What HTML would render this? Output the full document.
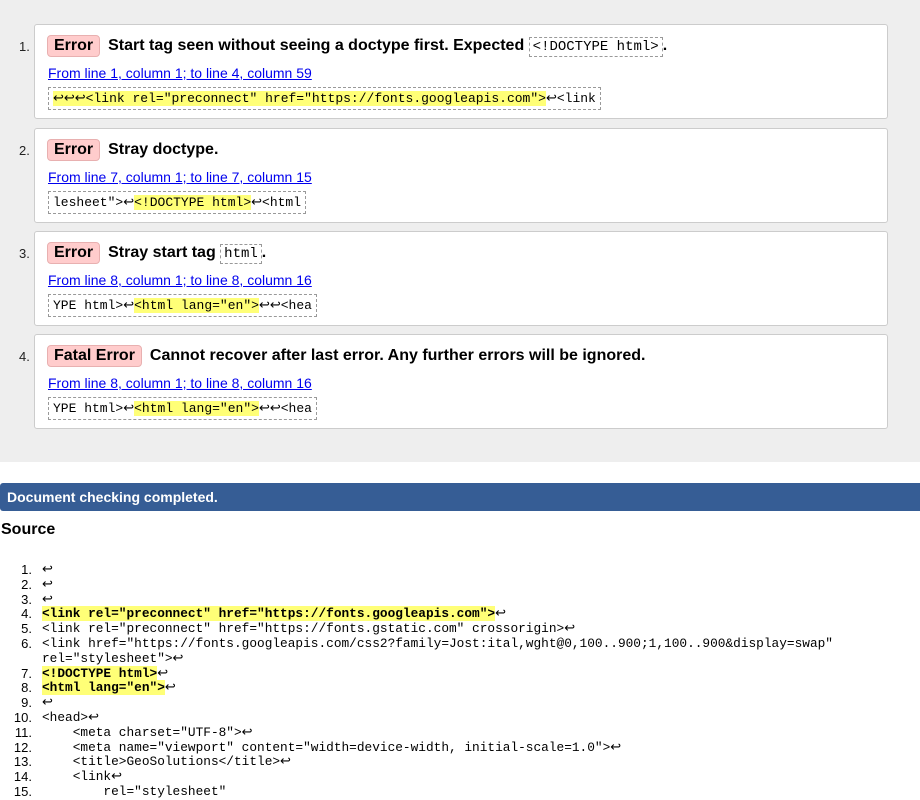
<!DOCTYPE html>
<html><head><style>
body{margin:0;width:920px;height:789px;overflow:hidden;font-family:"Liberation Sans",Arial,sans-serif;background:#fff;color:#000}
.top{position:absolute;left:0;top:0;width:920px;height:462px;background:#eee}
.box{position:absolute;left:34px;width:852px;height:93px;background:#fff;border:1px solid #ccc;border-radius:3px}
.num{position:absolute;left:-16px;top:14px;font-size:13px;color:#222}
.h{position:absolute;left:12px;top:10px;font-size:16px;font-weight:bold;white-space:nowrap;line-height:22px}
.tag{display:inline-block;background:#fcc;border:1px solid #e8b0b0;border-radius:4px;padding:0 6px;margin-right:8px;line-height:20px}
.h code{font-family:"Liberation Mono",monospace;font-weight:normal;font-size:14px;border:1px dashed #999;padding:1px 3px}
.lk{position:absolute;left:13px;top:40px;font-size:14px;color:#00e;text-decoration:underline}
.ex{position:absolute;left:13px;top:62px;border:1px dashed #999;padding:2px 4px;font-family:"Liberation Mono",monospace;font-size:13px;line-height:17px;white-space:pre}
.y{background:#ff7}
.bar{position:absolute;left:0;top:483px;width:920px;height:28px;background:#365d95;border-radius:3px 0 0 3px;color:#fff;font-weight:bold;font-size:14px;line-height:28px;padding-left:7px;box-sizing:border-box}
.src{position:absolute;left:1px;top:521px;font-size:16px;font-weight:bold}
.code{position:absolute;left:0;top:563px;font-size:13px;line-height:14.8px}
.row{position:relative;height:14.8px;white-space:pre}
.row .n{position:absolute;left:0;width:32px;text-align:right;font-family:"Liberation Sans",sans-serif}
.row .c{position:absolute;left:42px;font-family:"Liberation Mono",monospace;font-size:12.8px}
.b{font-weight:bold;background:#ff7}
</style></head><body>
<div class="top">
<div class="box" style="top:24px"><span class="num">1.</span>
<div class="h"><span class="tag">Error</span>Start tag seen without seeing a doctype first. Expected <code>&lt;!DOCTYPE html&gt;</code>.</div>
<div class="lk">From line 1, column 1; to line 4, column 59</div>
<div class="ex"><span class="y">↩↩↩&lt;link rel="preconnect" href="https://fonts.googleapis.com"&gt;</span>↩&lt;link</div></div>
<div class="box" style="top:128px"><span class="num">2.</span>
<div class="h"><span class="tag">Error</span>Stray doctype.</div>
<div class="lk">From line 7, column 1; to line 7, column 15</div>
<div class="ex">lesheet"&gt;↩<span class="y">&lt;!DOCTYPE html&gt;</span>↩&lt;html</div></div>
<div class="box" style="top:231px"><span class="num">3.</span>
<div class="h"><span class="tag">Error</span>Stray start tag <code>html</code>.</div>
<div class="lk">From line 8, column 1; to line 8, column 16</div>
<div class="ex">YPE html&gt;↩<span class="y">&lt;html lang="en"&gt;</span>↩↩&lt;hea</div></div>
<div class="box" style="top:334px"><span class="num">4.</span>
<div class="h"><span class="tag">Fatal Error</span>Cannot recover after last error. Any further errors will be ignored.</div>
<div class="lk">From line 8, column 1; to line 8, column 16</div>
<div class="ex">YPE html&gt;↩<span class="y">&lt;html lang="en"&gt;</span>↩↩&lt;hea</div></div>
</div>
<div class="bar">Document checking completed.</div>
<div class="src">Source</div>
<div class="code">
<div class="row"><span class="n">1.</span><span class="c">↩</span></div>
<div class="row"><span class="n">2.</span><span class="c">↩</span></div>
<div class="row"><span class="n">3.</span><span class="c">↩</span></div>
<div class="row"><span class="n">4.</span><span class="c"><span class="b">&lt;link rel="preconnect" href="https://fonts.googleapis.com"&gt;</span>↩</span></div>
<div class="row"><span class="n">5.</span><span class="c">&lt;link rel="preconnect" href="https://fonts.gstatic.com" crossorigin&gt;↩</span></div>
<div class="row"><span class="n">6.</span><span class="c">&lt;link href="https://fonts.googleapis.com/css2?family=Jost:ital,wght@0,100..900;1,100..900&amp;display=swap"</span></div>
<div class="row"><span class="c">rel="stylesheet"&gt;↩</span></div>
<div class="row"><span class="n">7.</span><span class="c"><span class="b">&lt;!DOCTYPE html&gt;</span>↩</span></div>
<div class="row"><span class="n">8.</span><span class="c"><span class="b">&lt;html lang="en"&gt;</span>↩</span></div>
<div class="row"><span class="n">9.</span><span class="c">↩</span></div>
<div class="row"><span class="n">10.</span><span class="c">&lt;head&gt;↩</span></div>
<div class="row"><span class="n">11.</span><span class="c">    &lt;meta charset="UTF-8"&gt;↩</span></div>
<div class="row"><span class="n">12.</span><span class="c">    &lt;meta name="viewport" content="width=device-width, initial-scale=1.0"&gt;↩</span></div>
<div class="row"><span class="n">13.</span><span class="c">    &lt;title&gt;GeoSolutions&lt;/title&gt;↩</span></div>
<div class="row"><span class="n">14.</span><span class="c">    &lt;link↩</span></div>
<div class="row"><span class="n">15.</span><span class="c">        rel="stylesheet"</span></div>
</div>
</body></html>
